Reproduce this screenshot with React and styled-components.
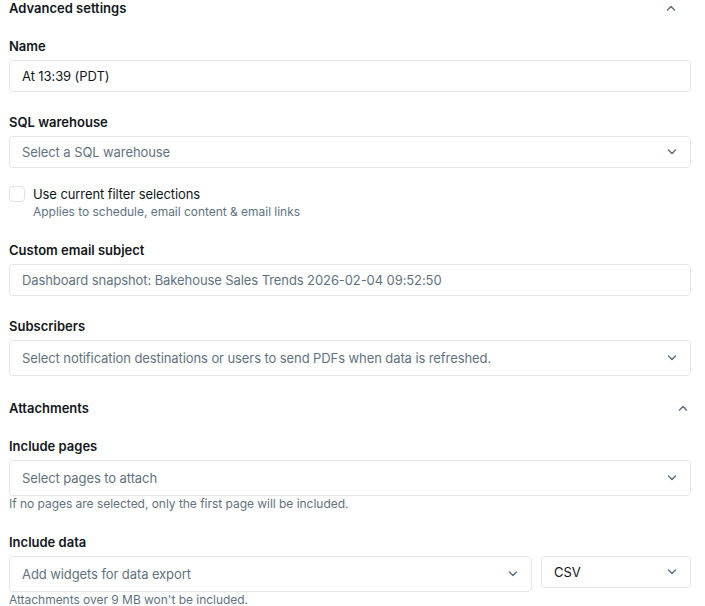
import styled, {createGlobalStyle} from 'styled-components';

const GlobalStyle = createGlobalStyle`
    html, body {
        margin: 0;
        padding: 0;
        background: #ffffff;
    }
    body {
        font-family: Inter, "Noto Sans", "Liberation Sans", sans-serif;
        color: #11171c;
        -webkit-font-smoothing: antialiased;
    }
`;

const Page = styled.div`
    width: 682px;
    padding: 0 14px 0 9px;
    display: flex;
    flex-direction: column;
`;

const SectionHeader = styled.div`
    display: flex;
    align-items: center;
    justify-content: space-between;
    height: 16px;
    margin-top: ${({$top}) => $top || 0}px;
    padding-right: ${({$inset}) => $inset || 0}px;
`;

const SectionTitle = styled.span`
    font-size: 13px;
    font-weight: 600;
    line-height: 16px;
`;

const Field = styled.div`
    display: flex;
    flex-direction: column;
    margin-top: ${({$top}) => ($top === undefined ? 20 : $top)}px;
`;

const Label = styled.label`
    font-size: 13px;
    font-weight: 600;
    line-height: 20px;
    margin-bottom: 4px;
`;

const Box = styled.div`
    box-sizing: border-box;
    display: flex;
    align-items: center;
    justify-content: space-between;
    height: ${({$tall}) => ($tall ? 36 : 32)}px;
    padding: 0 13px 0 12px;
    border: 1px solid #e4e8ec;
    border-radius: 4px;
    background: #ffffff;
    font-size: 13px;
    line-height: 20px;
    letter-spacing: -0.09px;
    flex: ${({$grow}) => ($grow ? 1 : 'none')};
    width: ${({$width}) => ($width ? `${$width}px` : 'auto')};
`;

const Value = styled.span`
    color: ${({$placeholder}) => ($placeholder ? '#5f7281' : '#11171c')};
    white-space: nowrap;
`;

const Help = styled.div`
    font-size: 12px;
    line-height: 16px;
    letter-spacing: -0.03px;
    color: #5f7281;
`;

const Row = styled.div`
    display: flex;
    align-items: flex-start;
    gap: 9px;
`;

const CheckRow = styled.div`
    display: flex;
    align-items: flex-start;
    gap: 8px;
    margin-top: 16px;
`;

const CheckBox = styled.span`
    box-sizing: border-box;
    width: 16px;
    height: 16px;
    margin-top: 2px;
    border: 1px solid #dfe4e8;
    border-radius: 4px;
    flex: none;
`;

const CheckText = styled.div`
    display: flex;
    flex-direction: column;
`;

const CheckLabel = styled.span`
    font-size: 13px;
    line-height: 20px;
    letter-spacing: -0.09px;
`;

const Chevron = ({up}) => (
    <svg width="10" height="6" viewBox="0 0 10 6" fill="none">
        <path
            d={up ? 'M1.5 5L5 1.5L8.5 5' : 'M1.5 1L5 4.5L8.5 1'}
            stroke="#5f7281"
            strokeWidth="1.5"
            strokeLinecap="round"
            strokeLinejoin="round"
        />
    </svg>
);

const Select = ({placeholder, value, tall, grow, width}) => (
    <Box $tall={tall} $grow={grow} $width={width}>
        <Value $placeholder={!value}>{value || placeholder}</Value>
        <Chevron/>
    </Box>
);

export default function App() {
    return (
        <>
            <GlobalStyle/>
            <Page>
                <SectionHeader $inset={15}>
                    <SectionTitle>Advanced settings</SectionTitle>
                    <Chevron up/>
                </SectionHeader>

                <Field>
                    <Label>Name</Label>
                    <Box>
                        <Value>At 13:39 (PDT)</Value>
                    </Box>
                </Field>

                <Field>
                    <Label>SQL warehouse</Label>
                    <Select placeholder="Select a SQL warehouse"/>
                </Field>

                <CheckRow>
                    <CheckBox/>
                    <CheckText>
                        <CheckLabel>Use current filter selections</CheckLabel>
                        <Help>Applies to schedule, email content &amp; email links</Help>
                    </CheckText>
                </CheckRow>

                <Field>
                    <Label>Custom email subject</Label>
                    <Box>
                        <Value $placeholder>Dashboard snapshot: Bakehouse Sales Trends 2026-02-04 09:52:50</Value>
                    </Box>
                </Field>

                <Field>
                    <Label>Subscribers</Label>
                    <Select tall placeholder="Select notification destinations or users to send PDFs when data is refreshed."/>
                </Field>

                <SectionHeader $top={24} $inset={3}>
                    <SectionTitle>Attachments</SectionTitle>
                    <Chevron up/>
                </SectionHeader>

                <Field>
                    <Label>Include pages</Label>
                    <Select tall placeholder="Select pages to attach"/>
                    <Help>If no pages are selected, only the first page will be included.</Help>
                </Field>

                <Field>
                    <Label>Include data</Label>
                    <Row>
                        <Select tall grow placeholder="Add widgets for data export"/>
                        <Select width={150} value="CSV"/>
                    </Row>
                    <Help>Attachments over 9 MB won't be included.</Help>
                </Field>
            </Page>
        </>
    );
}
